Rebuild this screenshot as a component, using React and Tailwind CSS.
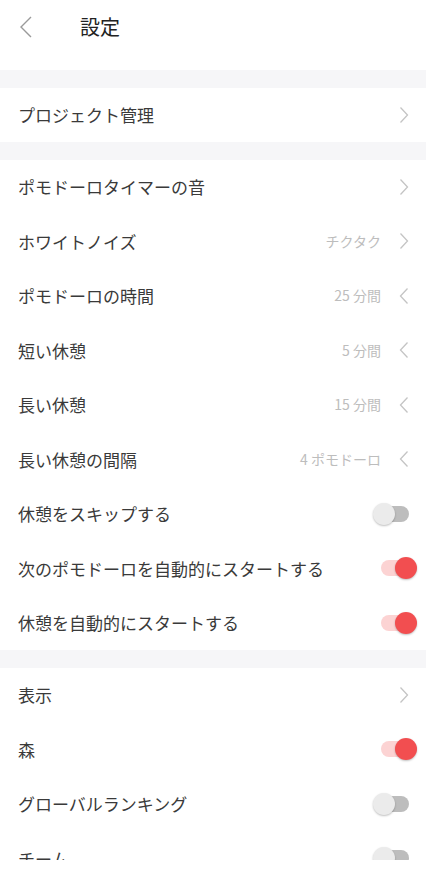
const FONT = { fontFamily: '"Noto Sans CJK JP", "Noto Sans", sans-serif' };

function Chevron({ dir = "right" }) {
  return (
    <svg width="10" height="18" viewBox="0 0 10 18" className="shrink-0">
      <path
        d={dir === "right" ? "M1.5 1.5 L8.5 9 L1.5 16.5" : "M8.5 1.5 L1.5 9 L8.5 16.5"}
        fill="none"
        stroke="#c4c4c4"
        strokeWidth="1.3"
      />
    </svg>
  );
}

function Toggle({ on }) {
  return (
    <div className="relative w-[44px] h-[24px] shrink-0">
      <div
        className={`absolute left-[8px] right-[8px] top-[4px] h-[16px] rounded-full ${
          on ? "bg-[#fcd3d3]" : "bg-[#bdbdbd]"
        }`}
      />
      <div
        className={`absolute top-[1px] w-[22px] h-[22px] rounded-full shadow-[0_1px_2px_rgba(0,0,0,0.25)] ${
          on ? "right-0 bg-[#f24e50]" : "left-0 bg-[#ebebeb]"
        }`}
      />
    </div>
  );
}

function Row({ label, value, chevron, toggle }) {
  return (
    <div
      className={`h-[54.5px] flex items-center justify-between pl-[18px] bg-white ${
        toggle !== undefined ? "pr-[9px]" : "pr-[17px]"
      }`}
    >
      <span className="text-[17px] text-[#3a3a3a]">{label}</span>
      <div className="flex items-center gap-[18px]">
        {value && <span className="text-[14px] text-[#bdbdbd]">{value}</span>}
        {chevron && <Chevron dir={chevron} />}
        {toggle !== undefined && <Toggle on={toggle} />}
      </div>
    </div>
  );
}

function Band() {
  return <div className="h-[17.5px] bg-[#f6f6f8]" />;
}

export default function App() {
  return (
    <div className="w-[426px] h-[869px] bg-white" style={FONT}>
      <div className="h-[860px] overflow-hidden">
        <div className="h-[70px] flex items-start pt-[12px]">
          <div className="w-[80px] pl-[18px] flex items-center h-[30px]">
            <svg width="16" height="24" viewBox="0 0 16 24">
              <path d="M13 2 L3 12 L13 22" fill="none" stroke="#9a9a9a" strokeWidth="1.4" />
            </svg>
          </div>
          <span className="text-[20px] leading-[30px] text-[#222]">設定</span>
        </div>

        <Band />
        <Row label="プロジェクト管理" chevron="right" />
        <Band />

        <Row label="ポモドーロタイマーの音" chevron="right" />
        <Row label="ホワイトノイズ" value="チクタク" chevron="right" />
        <Row label="ポモドーロの時間" value="25 分間" chevron="left" />
        <Row label="短い休憩" value="5 分間" chevron="left" />
        <Row label="長い休憩" value="15 分間" chevron="left" />
        <Row label="長い休憩の間隔" value="4 ポモドーロ" chevron="left" />
        <Row label="休憩をスキップする" toggle={false} />
        <Row label="次のポモドーロを自動的にスタートする" toggle={true} />
        <Row label="休憩を自動的にスタートする" toggle={true} />
        <Band />

        <Row label="表示" chevron="right" />
        <Row label="森" toggle={true} />
        <Row label="グローバルランキング" toggle={false} />
        <Row label="チーム" toggle={false} />
      </div>
    </div>
  );
}
